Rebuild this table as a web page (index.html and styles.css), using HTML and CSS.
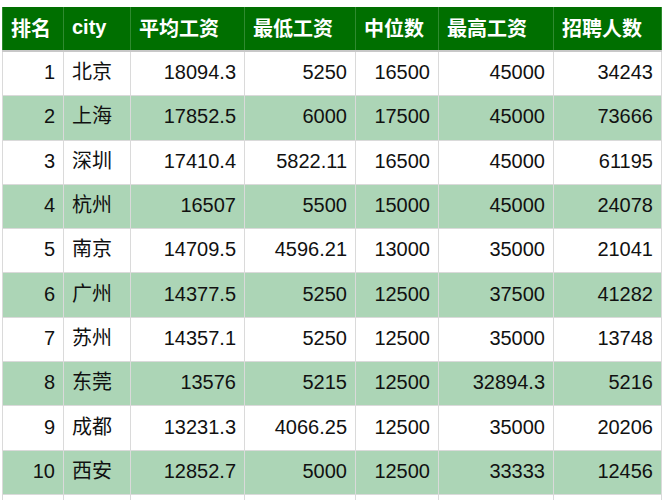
FILE: index.html
```html
<!DOCTYPE html>
<html lang="zh">
<head>
<meta charset="utf-8">
<link rel="stylesheet" href="styles.css">
</head>
<body>
<table class="salary">
  <colgroup>
    <col class="c1"><col class="c2"><col class="c3"><col class="c4"><col class="c5"><col class="c6"><col class="c7">
  </colgroup>
  <thead>
    <tr><th>排名</th><th>city</th><th>平均工资</th><th>最低工资</th><th>中位数</th><th>最高工资</th><th>招聘人数</th></tr>
  </thead>
  <tbody>
    <tr><td class="num">1</td><td>北京</td><td class="num">18094.3</td><td class="num">5250</td><td class="num">16500</td><td class="num">45000</td><td class="num">34243</td></tr>
    <tr class="alt"><td class="num">2</td><td>上海</td><td class="num">17852.5</td><td class="num">6000</td><td class="num">17500</td><td class="num">45000</td><td class="num">73666</td></tr>
    <tr><td class="num">3</td><td>深圳</td><td class="num">17410.4</td><td class="num">5822.11</td><td class="num">16500</td><td class="num">45000</td><td class="num">61195</td></tr>
    <tr class="alt"><td class="num">4</td><td>杭州</td><td class="num">16507</td><td class="num">5500</td><td class="num">15000</td><td class="num">45000</td><td class="num">24078</td></tr>
    <tr><td class="num">5</td><td>南京</td><td class="num">14709.5</td><td class="num">4596.21</td><td class="num">13000</td><td class="num">35000</td><td class="num">21041</td></tr>
    <tr class="alt"><td class="num">6</td><td>广州</td><td class="num">14377.5</td><td class="num">5250</td><td class="num">12500</td><td class="num">37500</td><td class="num">41282</td></tr>
    <tr><td class="num">7</td><td>苏州</td><td class="num">14357.1</td><td class="num">5250</td><td class="num">12500</td><td class="num">35000</td><td class="num">13748</td></tr>
    <tr class="alt"><td class="num">8</td><td>东莞</td><td class="num">13576</td><td class="num">5215</td><td class="num">12500</td><td class="num">32894.3</td><td class="num">5216</td></tr>
    <tr><td class="num">9</td><td>成都</td><td class="num">13231.3</td><td class="num">4066.25</td><td class="num">12500</td><td class="num">35000</td><td class="num">20206</td></tr>
    <tr class="alt"><td class="num">10</td><td>西安</td><td class="num">12852.7</td><td class="num">5000</td><td class="num">12500</td><td class="num">33333</td><td class="num">12456</td></tr>
    <tr><td class="num"></td><td></td><td class="num"></td><td class="num"></td><td class="num"></td><td class="num"></td><td class="num"></td></tr>
  </tbody>
</table>
</body>
</html>
```
FILE: styles.css
```css
html, body {
  margin: 0;
  background: #ffffff;
}
body {
  padding: 7px 0 0 2px;
  font-family: "Liberation Sans", "Noto Sans CJK SC", sans-serif;
  font-size: 20px;
  color: #111111;
  overflow: hidden;
  height: 500px;
  box-sizing: border-box;
}
.salary {
  border-collapse: collapse;
  table-layout: fixed;
  width: 659px;
}
.c1 { width: 61px; }
.c2 { width: 67px; }
.c3 { width: 114px; }
.c4 { width: 111px; }
.c5 { width: 83px; }
.c6 { width: 115px; }
.c7 { width: 108px; }
.salary th {
  background: #006f00;
  color: #ffffff;
  font-weight: bold;
  text-align: left;
  padding: 0 8px 3px;
  height: 40px;
  border: 1px solid #2f8a2f;
  border-bottom: 2px solid #c8c8c8;
  border-top: none;
  white-space: nowrap;
  vertical-align: middle;
}
.salary td {
  padding: 0 8px 3px;
  height: 40.3px;
  border: 1px solid #dadada;
  border-top: none;
  white-space: nowrap;
  vertical-align: middle;
  line-height: 24px;
}
.salary td.num {
  text-align: right;
}
.salary tr.alt td {
  background: #acd5b6;
}
```
